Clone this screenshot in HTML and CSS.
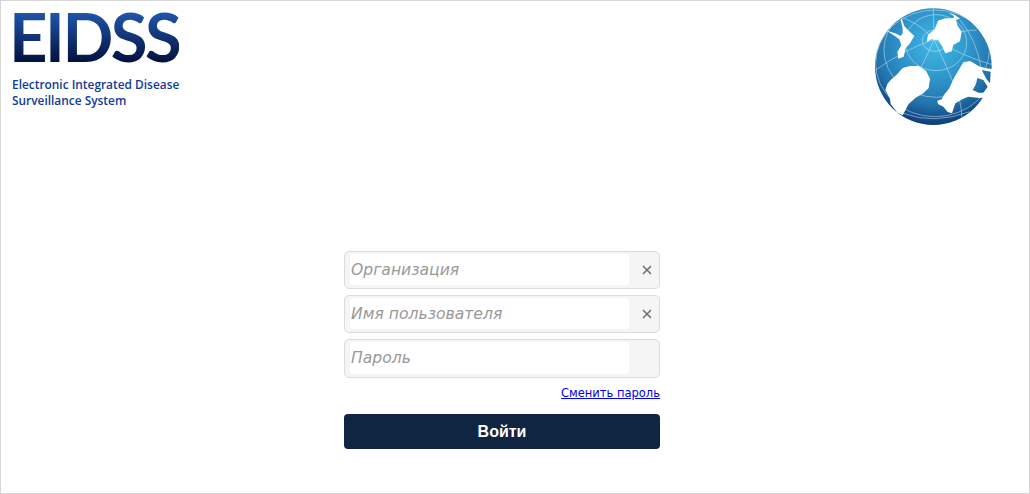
FILE: index.html
```html
<!DOCTYPE html>
<html lang="ru">

<head>
  <meta charset="UTF-8" />
  <meta name="viewport" content="width=device-width, initial-scale=1.0" />
  <title>EIDSS</title>
  <link rel="stylesheet" href="styles.css">
</head>

<body>
  <div class="page">
    <header class="header">
      <div class="brand">
        <div class="brand-name">EIDSS</div>
        <div class="brand-text">Electronic Integrated Disease<br>Surveillance System</div>
      </div>
      <svg class="globe" viewBox="0 3 450 390" aria-hidden="true">
        <defs>
          <radialGradient id="sea" gradientUnits="userSpaceOnUse" cx="225" cy="135" r="290">
            <stop offset="0" stop-color="#40b7e5" />
            <stop offset="0.35" stop-color="#2f96cc" />
            <stop offset="0.62" stop-color="#2273ad" />
            <stop offset="0.82" stop-color="#0e3f7a" />
            <stop offset="1" stop-color="#08295f" />
          </radialGradient>
          <clipPath id="disc">
            <circle cx="220" cy="200" r="175" />
          </clipPath>
        </defs>
        <circle cx="220" cy="200" r="175" fill="url(#sea)" />
        <g clip-path="url(#disc)" fill="none" stroke="#d5eef9" stroke-width="2" opacity="0.75">
          <ellipse cx="225" cy="122" rx="38" ry="32" />
          <ellipse cx="228" cy="128" rx="92" ry="84" />
          <ellipse cx="230" cy="150" rx="158" ry="142" />
          <ellipse cx="225" cy="190" rx="178" ry="160" />
          <path d="M222 118 L220 20" />
          <path d="M222 118 Q170 60 110 50" />
          <path d="M222 118 Q130 150 40 215" />
          <path d="M222 118 Q190 200 130 290 Q110 340 100 360" />
          <path d="M222 118 Q255 190 290 270 Q310 330 305 380" />
          <path d="M222 118 Q310 170 400 195" />
          <path d="M222 118 Q300 90 350 90" />
          <path d="M130 340 Q220 375 330 335" />
          <path d="M300 60 Q350 120 365 210" />
        </g>
        <g fill="#fff">
          <!-- top left land -->
          <path d="M122 58 L126 58 L133 78 L146 92 L163 108 L150 130 L137 145 L131 170 L115 176 L112 156 L124 136 L118 118 L104 108 L80 92 L106 100 L122 108 L128 100 L128 88 Z" />
          <!-- top centre land -->
          <path d="M264 38 L284 44 L300 56 L288 60 L292 76 L305 95 L300 124 L280 135 L275 154 L256 160 L247 140 L235 121 L214 118 L200 126 L204 104 L224 88 L234 62 L256 55 L280 55 L282 48 Z" />
          <!-- bottom left land -->
          <path d="M92 240 L110 224 L128 204 L150 198 L176 198 L198 212 L210 236 L206 264 L190 280 L166 294 L146 312 L128 346 L112 338 L92 312 L90 296 L76 270 L82 252 Z" />
          <!-- bottom right land, runs off the rim -->
          <path d="M310 187 L330 183 L360 200 L380 205 L400 208 L408 250 L388 292 L358 294 L325 290 L310 296 L286 310 L276 340 L263 336 L250 320 L234 312 L232 302 L245 298 L252 284 L266 268 L284 230 Z" />
        </g>
        <!-- dark bays between the stripes on the right rim -->
        <g fill="url(#sea)">
          <path d="M365 210 L392 215 L390 250 L378 235 Z" />
          <path d="M352 234 L370 240 L383 260 L370 278 L356 278 L338 270 L348 252 Z" />
        </g>
      </svg>
    </header>

    <form class="login">
      <div class="field">
        <input class="field-input" type="text" placeholder="Организация">
        <span class="field-addon">
          <svg class="icon-clear" viewBox="0 0 10 10"><path d="M1 1 L9 9 M9 1 L1 9" /></svg>
        </span>
      </div>
      <div class="field">
        <input class="field-input" type="text" placeholder="Имя пользователя">
        <span class="field-addon">
          <svg class="icon-clear" viewBox="0 0 10 10"><path d="M1 1 L9 9 M9 1 L1 9" /></svg>
        </span>
      </div>
      <div class="field field-last">
        <input class="field-input" type="password" placeholder="Пароль">
        <span class="field-addon"></span>
      </div>
      <div class="links">
        <a href="#">Сменить пароль</a>
      </div>
      <button class="submit" type="submit">Войти</button>
    </form>
  </div>
</body>

</html>
```

FILE: styles.css
```css
body {
  margin: 0;
  font-family: "DejaVu Sans", sans-serif;
  background: #fff;
}

.page {
  box-sizing: border-box;
  height: 494px;
  border: 1px solid #d6d6d6;
  overflow: hidden;
}

.header {
  display: flex;
  justify-content: space-between;
  align-items: flex-start;
  height: 250px;
}

.brand {
  padding: 0 0 0 8px;
}

.brand-name {
  font-family: "Lato", sans-serif;
  font-size: 67px;
  font-weight: 700;
  line-height: 70px;
  letter-spacing: -2.5px;
  background: linear-gradient(to bottom, #1f55ab 12px, #03103c 62px);
  -webkit-background-clip: text;
  background-clip: text;
  color: transparent;
}

.brand-text {
  margin-top: 5px;
  padding-left: 3px;
  font-family: "Open Sans", sans-serif;
  font-size: 11.9px;
  font-weight: 600;
  line-height: 16px;
  color: #103c99;
}

.globe {
  display: block;
  width: 150px;
  height: 130px;
  margin-right: 19px;
}

.login {
  width: 316px;
  margin-left: 343px;
}

.field {
  box-sizing: border-box;
  display: flex;
  height: 38px;
  margin-bottom: 6px;
  padding: 2px 0 3px 5px;
  border: 1px solid #dcdcdc;
  border-radius: 5px;
  background: #f5f5f5;
}

.field-last {
  height: 39px;
  margin-bottom: 0;
}

.field-input {
  flex: 1;
  min-width: 0;
  box-sizing: border-box;
  padding: 0 1px;
  border: 0;
  border-radius: 3px;
  background: #fff;
  font-family: "DejaVu Sans", sans-serif;
  font-size: 15.6px;
  font-style: italic;
  color: #555;
}

.field-input::placeholder {
  color: #999;
  opacity: 1;
}

.field-input:focus {
  outline: none;
}

.field-addon {
  box-sizing: border-box;
  display: flex;
  align-items: center;
  justify-content: center;
  width: 30px;
  padding-left: 6px;
  flex: none;
}

.icon-clear {
  width: 10px;
  height: 10px;
  fill: none;
  stroke: #666e78;
  stroke-width: 1.5;
}

.links {
  margin-top: 8px;
  font-size: 11.5px;
  line-height: 15px;
  text-align: right;
}

.submit {
  display: block;
  width: 100%;
  height: 35px;
  margin-top: 13px;
  border: 0;
  border-radius: 4px;
  background: #102542;
  font-family: "Liberation Sans", sans-serif;
  font-size: 16px;
  font-weight: bold;
  color: #fff;
  cursor: pointer;
}
```
